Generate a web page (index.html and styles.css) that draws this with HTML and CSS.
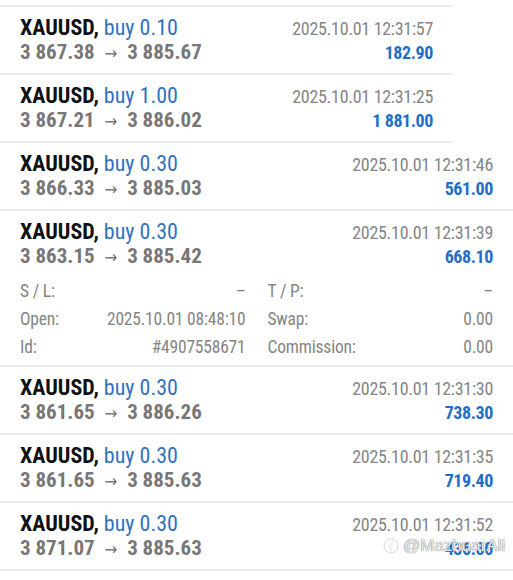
FILE: index.html
```html
<!DOCTYPE html>
<html lang="en">
<head>
    <meta charset="UTF-8">
    <meta name="viewport" content="width=device-width, initial-scale=1.0">
    <title>History</title>
    <link rel="stylesheet" href="styles.css">
</head>
<body>

<div class="history">

    <!-- first two deals (narrower capture) -->
    <div class="group group-narrow">
        <div class="deal">
            <div class="deal-line">
                <span class="title"><b>XAUUSD,</b> <span class="type">buy 0.10</span></span>
                <span class="time">2025.10.01 12:31:57</span>
            </div>
            <div class="deal-line">
                <span class="prices">3 867.38 <span class="arrow">→</span> 3 885.67</span>
                <span class="profit">182.90</span>
            </div>
        </div>
        <div class="deal">
            <div class="deal-line">
                <span class="title"><b>XAUUSD,</b> <span class="type">buy 1.00</span></span>
                <span class="time">2025.10.01 12:31:25</span>
            </div>
            <div class="deal-line">
                <span class="prices">3 867.21 <span class="arrow">→</span> 3 886.02</span>
                <span class="profit">1 881.00</span>
            </div>
        </div>
    </div>

    <div class="group">
        <div class="deal">
            <div class="deal-line">
                <span class="title"><b>XAUUSD,</b> <span class="type">buy 0.30</span></span>
                <span class="time">2025.10.01 12:31:46</span>
            </div>
            <div class="deal-line">
                <span class="prices">3 866.33 <span class="arrow">→</span> 3 885.03</span>
                <span class="profit">561.00</span>
            </div>
        </div>

        <!-- expanded deal with details -->
        <div class="deal deal-open">
            <div class="deal-line">
                <span class="title"><b>XAUUSD,</b> <span class="type">buy 0.30</span></span>
                <span class="time">2025.10.01 12:31:39</span>
            </div>
            <div class="deal-line">
                <span class="prices">3 863.15 <span class="arrow">→</span> 3 885.42</span>
                <span class="profit">668.10</span>
            </div>
            <div class="details">
                <div class="detail"><span>S / L:</span><span>–</span></div>
                <div class="detail"><span>T / P:</span><span>–</span></div>
                <div class="detail"><span>Open:</span><span>2025.10.01 08:48:10</span></div>
                <div class="detail"><span>Swap:</span><span>0.00</span></div>
                <div class="detail"><span>Id:</span><span>#4907558671</span></div>
                <div class="detail"><span>Commission:</span><span>0.00</span></div>
            </div>
        </div>

        <div class="deal">
            <div class="deal-line">
                <span class="title"><b>XAUUSD,</b> <span class="type">buy 0.30</span></span>
                <span class="time">2025.10.01 12:31:30</span>
            </div>
            <div class="deal-line">
                <span class="prices">3 861.65 <span class="arrow">→</span> 3 886.26</span>
                <span class="profit">738.30</span>
            </div>
        </div>
        <div class="deal">
            <div class="deal-line">
                <span class="title"><b>XAUUSD,</b> <span class="type">buy 0.30</span></span>
                <span class="time">2025.10.01 12:31:35</span>
            </div>
            <div class="deal-line">
                <span class="prices">3 861.65 <span class="arrow">→</span> 3 885.63</span>
                <span class="profit">719.40</span>
            </div>
        </div>
        <div class="deal">
            <div class="deal-line">
                <span class="title"><b>XAUUSD,</b> <span class="type">buy 0.30</span></span>
                <span class="time">2025.10.01 12:31:52</span>
            </div>
            <div class="deal-line">
                <span class="prices">3 871.07 <span class="arrow">→</span> 3 885.63</span>
                <span class="profit">436.80</span>
            </div>
        </div>
    </div>

    <!-- watermark -->
    <div class="watermark">
        <svg width="16" height="16" viewBox="0 0 16 16">
            <circle cx="8" cy="8" r="7" fill="none" stroke="#d6d6d6" stroke-width="1"/>
            <path d="M9.5 4.5h-1c-1 0-1.5 0.6-1.5 1.5v1.5h-1.2v1.5h1.2v4h1.5v-4h1.3l0.2-1.5h-1.5v-1.2c0-0.3 0.2-0.4 0.4-0.4h0.6z" fill="none" stroke="#e0e0e0" stroke-width="0.6"/>
        </svg>
        <span>@MazhuarAli</span>
    </div>
</div>

</body>
</html>
```

FILE: styles.css
```css
body {
    margin: 0;
    padding: 0;
    background-color: #fff;
    font-family: "Roboto Condensed", "Liberation Sans Narrow", "DejaVu Sans Condensed", Roboto, sans-serif;
    font-stretch: condensed;
    color: #141414;
}

.history {
    position: relative;
    padding-top: 5px;
}

.group-narrow {
    width: 453px;
    border-top: 2px solid #ececec;
}

.deal {
    padding: 9px 20px 9px 20px;
    border-bottom: 2px solid #ececec;
}

.deal-open {
    padding-bottom: 4px;
}

.deal-line {
    display: flex;
    justify-content: space-between;
    align-items: baseline;
    height: 24px;
    line-height: 24px;
}

.title {
    font-size: 22px;
}

.title b {
    color: #111;
}

.type {
    color: #2f73c0;
}

.time {
    font-size: 18px;
    letter-spacing: -0.3px;
    color: #858585;
}

.prices {
    font-size: 21px;
    font-weight: bold;
    color: #777;
}

.arrow {
    font-weight: normal;
    font-size: 17px;
    margin: 0 5px;
}

.profit {
    font-size: 18px;
    letter-spacing: -0.4px;
    font-weight: bold;
    color: #1f6fc9;
}

/* Dettagli della posizione aperta */
.details {
    display: grid;
    grid-template-columns: 1fr 1fr;
    column-gap: 22px;
    margin-top: 9px;
}

.detail {
    display: flex;
    justify-content: space-between;
    height: 28px;
    line-height: 28px;
    font-size: 17.5px;
    letter-spacing: -0.2px;
    color: #858585;
}

.watermark {
    position: absolute;
    left: 383px;
    top: 536px;
    display: flex;
    align-items: center;
    gap: 4px;
    font-family: "Liberation Sans", sans-serif;
    font-size: 17px;
    color: rgba(255, 255, 255, 0.85);
    text-shadow: 0 0 1px #777, 0 0 1px #999;
}
```
